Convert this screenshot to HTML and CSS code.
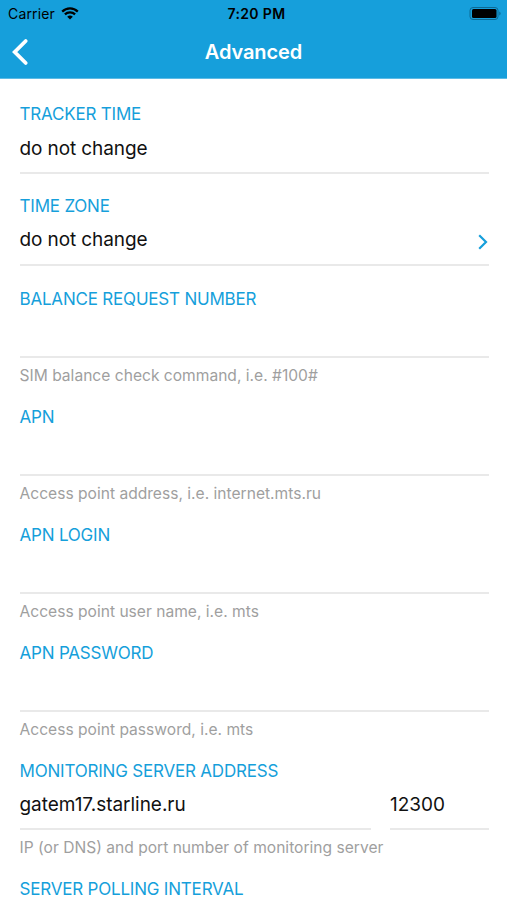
FILE: index.html
```html
<!DOCTYPE html>
<html lang="en">
<head>
    <meta charset="UTF-8">
    <meta name="viewport" content="width=device-width, initial-scale=1.0">
    <title>Advanced</title>
    <link rel="stylesheet" href="styles.css">
</head>
<body>
    <header class="header">
        <div class="status-bar">
            <div class="carrier">
                <span class="carrier-name">Carrier</span>
                <svg class="wifi" width="18" height="13" viewBox="0 0 18 13">
                    <path d="M1.2 4.6a11 11 0 0 1 15.6 0M3.9 7.4a7.2 7.2 0 0 1 10.2 0" fill="none" stroke="#000" stroke-width="2.2"/>
                    <path d="M9 12.6L6.2 9.8a4 4 0 0 1 5.6 0z"/>
                </svg>
            </div>
            <span class="time">7:20 PM</span>
            <div class="battery">
                <svg width="32" height="13" viewBox="0 0 32 13">
                    <rect x="1" y="0.5" width="28" height="12" rx="3" fill="none" stroke="#0d6a94"/>
                    <rect x="3" y="2" width="24.5" height="9" rx="1.5"/>
                    <path d="M30.3 4.5a2.2 2.2 0 0 1 0 4z" fill="#0d6a94"/>
                </svg>
            </div>
        </div>
        <div class="nav-bar">
            <svg class="back" width="17" height="28" viewBox="0 0 17 28">
                <path d="M13.7 3L2.7 14l11 11" fill="none" stroke="#fff" stroke-width="3.8" stroke-linecap="round"/>
            </svg>
            <h1>Advanced</h1>
        </div>
    </header>

    <main class="settings">
        <section class="field first">
            <h2>TRACKER TIME</h2>
            <div class="value">do not change</div>
        </section>
        <section class="field">
            <h2>TIME ZONE</h2>
            <div class="value">
                <span>do not change</span>
                <svg class="chevron" width="10" height="16" viewBox="0 0 10 16">
                    <path d="M1.2 1.2L8 8l-6.8 6.8" fill="none" stroke="#169fdb" stroke-width="2.2"/>
                </svg>
            </div>
        </section>
        <section class="field hinted">
            <h2>BALANCE REQUEST NUMBER</h2>
            <div class="value"></div>
            <p>SIM balance check command, i.e. #100#</p>
        </section>
        <section class="field hinted">
            <h2>APN</h2>
            <div class="value"></div>
            <p>Access point address, i.e. internet.mts.ru</p>
        </section>
        <section class="field hinted">
            <h2>APN LOGIN</h2>
            <div class="value"></div>
            <p>Access point user name, i.e. mts</p>
        </section>
        <section class="field hinted">
            <h2>APN PASSWORD</h2>
            <div class="value"></div>
            <p>Access point password, i.e. mts</p>
        </section>
        <section class="field hinted">
            <h2>MONITORING SERVER ADDRESS</h2>
            <div class="server">
                <div class="value">gatem17.starline.ru</div>
                <div class="value">12300</div>
            </div>
            <p>IP (or DNS) and port number of monitoring server</p>
        </section>
        <section class="last">
            <h2>SERVER POLLING INTERVAL</h2>
        </section>
    </main>
</body>
</html>
```
FILE: styles.css
```css
* {
    box-sizing: border-box;
}

body {
    margin: 0;
    background-color: #fff;
    color: #111;
    font-family: Inter, "Liberation Sans", sans-serif;
}

.header {
    height: 79px;
    background-color: #169fdb;
    border-bottom: 1px solid #5dbbe5;
}

.status-bar {
    display: grid;
    grid-template-columns: 1fr auto 1fr;
    align-items: center;
    height: 27px;
    padding: 0 6px 0 8px;
    color: #000;
    font-size: 14px;
}

.carrier {
    display: flex;
    align-items: center;
    gap: 6px;
}

.carrier-name {
    letter-spacing: 0.15px;
}

.time {
    padding-left: 4px;
    font-weight: 600;
    letter-spacing: 0.35px;
}

.battery {
    display: flex;
    justify-content: flex-end;
}

.nav-bar {
    display: grid;
    grid-template-columns: 1fr auto 1fr;
    align-items: center;
    height: 50px;
    padding: 0 12px;
}

h1 {
    margin: 0;
    color: #fff;
    font-size: 20px;
    font-weight: 600;
    letter-spacing: -0.1px;
}

.settings {
    padding: 21px 18px 0 19.5px;
}

.field {
    height: 93px;
}

.first {
    height: 92px;
}

.hinted {
    height: 118px;
}

h2 {
    margin: 0;
    height: 28px;
    color: #169fdb;
    font-size: 17px;
    font-weight: 400;
    line-height: 28px;
    letter-spacing: -0.2px;
}

.value {
    display: flex;
    align-items: center;
    justify-content: space-between;
    height: 46px;
    padding-bottom: 5px;
    border-bottom: 2px solid #e9e9e9;
    font-size: 19px;
    letter-spacing: -0.1px;
}

.first .value {
    padding-bottom: 4px;
}

.hinted .value {
    height: 45px;
    padding-bottom: 4px;
    letter-spacing: -0.03px;
}

.chevron {
    margin-top: 5px;
    margin-right: 1px;
}

.server {
    display: grid;
    grid-template-columns: 1fr 99px;
    gap: 19px;
}

p {
    margin: 0;
    color: #9f9f9f;
    font-size: 15.6px;
    line-height: 35px;
}
```
